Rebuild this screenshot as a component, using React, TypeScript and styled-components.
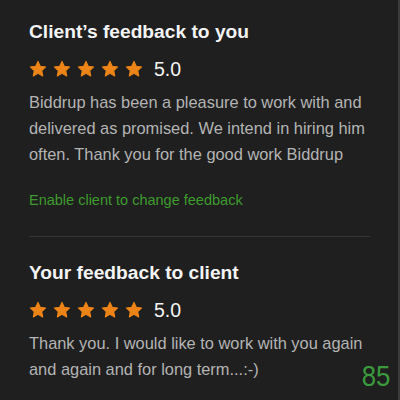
import styled, { createGlobalStyle } from "styled-components";

const GlobalStyle = createGlobalStyle`
  html, body {
    margin: 0;
    padding: 0;
    background: #1f1f1f;
  }
  body {
    font-family: "Liberation Sans", Arial, sans-serif;
    -webkit-font-smoothing: antialiased;
  }
`;

const Page = styled.div`
  position: relative;
  width: 400px;
  height: 400px;
  box-sizing: border-box;
  background: #1f1f1f;
  border-right: 2px solid #3a3a3a;
  overflow: hidden;
  padding: 19px 28px 0 29px;
`;

const Section = styled.section`
  display: flex;
  flex-direction: column;
`;

const Heading = styled.h2`
  margin: 0;
  color: #f4f4f4;
  font-size: 19.2px;
  font-weight: 700;
  line-height: 26px;
`;

const RatingRow = styled.div`
  display: flex;
  align-items: center;
  gap: 6px;
  margin-top: 12px;
  height: 24px;
`;

const Stars = styled.div`
  display: flex;
  gap: 6px;
`;

const Score = styled.span`
  margin-left: 5px;
  color: #f4f4f4;
  font-size: 19.5px;
  line-height: 24px;
`;

const Body = styled.p`
  margin: 8px 0 0;
  color: #b4b4b4;
  font-size: 16.4px;
  line-height: 26px;
`;

const EnableLink = styled.a`
  margin-top: 23px;
  color: #3e9b2e;
  font-size: 14.5px;
  line-height: 20px;
  cursor: pointer;
`;

const Divider = styled.hr`
  margin: 26px 0 23px;
  border: 0;
  border-top: 1px solid #353535;
`;

const PageNumber = styled.span`
  position: absolute;
  right: 8px;
  bottom: 12px;
  color: #3a9a3c;
  font-size: 30px;
  line-height: 24px;
  transform: scaleX(0.86);
  transform-origin: right center;
`;

const Star = () => (
  <svg width="18" height="18" viewBox="0 0 24 24">
    <path
      d="M12 1.8l3.1 6.6 7.1.9-5.2 4.9 1.3 7.1L12 17.8l-6.3 3.5 1.3-7.1-5.2-4.9 7.1-.9z"
      fill="#ec8417"
      stroke="#ec8417"
      strokeWidth="1.4"
      strokeLinejoin="round"
    />
  </svg>
);

const Rating = ({ value }: { value: string }) => (
  <RatingRow>
    <Stars>
      {[0, 1, 2, 3, 4].map((i) => (
        <Star key={i} />
      ))}
    </Stars>
    <Score>{value}</Score>
  </RatingRow>
);

export default function App() {
  return (
    <>
      <GlobalStyle />
      <Page>
        <Section>
          <Heading>Client’s feedback to you</Heading>
          <Rating value="5.0" />
          <Body>
            Biddrup has been a pleasure to work with and delivered as
            promised. We intend in hiring him often. Thank you for the good
            work Biddrup
          </Body>
          <EnableLink>Enable client to change feedback</EnableLink>
        </Section>
        <Divider />
        <Section>
          <Heading>Your feedback to client</Heading>
          <Rating value="5.0" />
          <Body>
            Thank you. I would like to work with you again and again and for
            long term...:-)
          </Body>
        </Section>
        <PageNumber>85</PageNumber>
      </Page>
    </>
  );
}
